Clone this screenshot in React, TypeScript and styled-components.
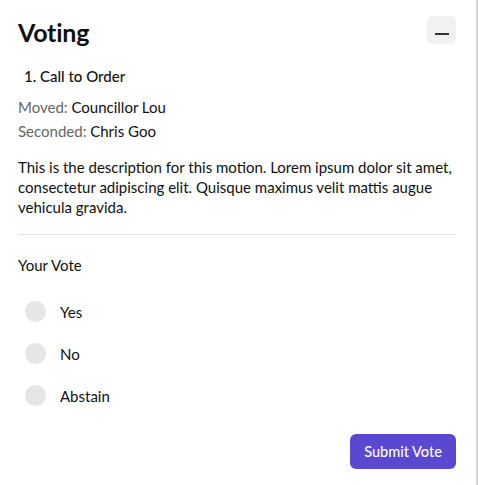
import React from "react";
import styled, { createGlobalStyle } from "styled-components";

const Global = createGlobalStyle`
  html, body { margin: 0; padding: 0; background: #fff; }
  body { font-family: Lato, "Noto Sans", sans-serif; color: #111; }
`;

const Panel = styled.div`
  box-sizing: border-box;
  width: 478px;
  height: 485px;
  padding: 16px 20px 16px 18px;
  border-right: 2px solid #d6d6d6;
  display: flex;
  flex-direction: column;
`;

const Header = styled.div`
  display: flex;
  justify-content: space-between;
  align-items: center;
  height: 32px;
`;

const Title = styled.h1`
  margin: 0;
  font-size: 25px;
  font-weight: 700;
  letter-spacing: -0.2px;
`;

const MinButton = styled.button`
  width: 29px;
  height: 28px;
  border: none;
  border-radius: 6px;
  background: #f1f1f3;
  display: flex;
  align-items: center;
  justify-content: center;
  padding: 0;
  margin-top: -4px;
  &::after {
    content: "";
    width: 14px;
    height: 2px;
    background: #333;
    margin-top: 8px;
  }
`;

const ItemTitle = styled.div`
  margin: 18px 0 0 6px;
  font-size: 15px;
  line-height: 20px;
  font-weight: 500;
`;

const Meta = styled.div`
  margin-top: 11px;
  display: flex;
  flex-direction: column;
  gap: 4px;
  font-size: 15px;
  line-height: 20px;
`;

const MetaLabel = styled.span`
  color: #666;
`;

const Description = styled.p`
  margin: 16px 0 0;
  font-size: 15px;
  line-height: 20px;
`;

const Divider = styled.hr`
  margin: 17px 0 0;
  border: none;
  border-top: 1px solid #e4e4e4;
`;

const Subhead = styled.div`
  margin-top: 20px;
  font-size: 15px;
  line-height: 20px;
`;

const Options = styled.div`
  margin-top: 26px;
  display: flex;
  flex-direction: column;
  gap: 21px;
  padding-left: 7px;
`;

const Option = styled.label`
  display: flex;
  align-items: center;
  gap: 14px;
  font-size: 15px;
  height: 21px;
`;

const Radio = styled.span`
  width: 21px;
  height: 21px;
  border-radius: 50%;
  background: #e6e6e6;
`;

const Footer = styled.div`
  margin-top: auto;
  display: flex;
  justify-content: flex-end;
`;

const Submit = styled.button`
  width: 106px;
  height: 35px;
  border: none;
  border-radius: 6px;
  background: #5a48d0;
  color: #fff;
  font-family: Lato, "Noto Sans", sans-serif;
  font-size: 14.5px;
  font-weight: 500;
`;

export default function App() {
  return (
    <>
      <Global />
      <Panel>
        <Header>
          <Title>Voting</Title>
          <MinButton aria-label="Minimize" />
        </Header>
        <ItemTitle>1. Call to Order</ItemTitle>
        <Meta>
          <div><MetaLabel>Moved:</MetaLabel> Councillor Lou</div>
          <div><MetaLabel>Seconded:</MetaLabel> Chris Goo</div>
        </Meta>
        <Description>
          This is the description for this motion. Lorem ipsum dolor sit amet,
          consectetur adipiscing elit. Quisque maximus velit mattis augue
          vehicula gravida.
        </Description>
        <Divider />
        <Subhead>Your Vote</Subhead>
        <Options>
          {["Yes", "No", "Abstain"].map((o) => (
            <Option key={o}>
              <Radio />
              {o}
            </Option>
          ))}
        </Options>
        <Footer>
          <Submit>Submit Vote</Submit>
        </Footer>
      </Panel>
    </>
  );
}
